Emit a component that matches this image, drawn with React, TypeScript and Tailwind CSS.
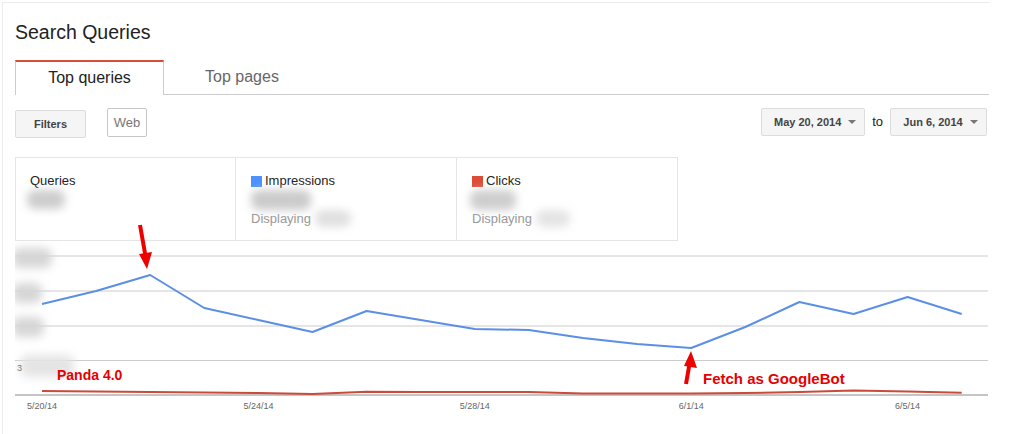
import React from "react";

const impressions = [304, 291, 275, 308, 320, 332, 311, 320, 329, 330, 338, 344, 348, 327, 302, 314, 297, 314];
const clicks = [391, 391.5, 392, 392.5, 393, 394, 391.7, 392, 392, 392, 393.5, 393.5, 393.5, 393, 392, 390.5, 391.5, 392.7];
const xAt = (i: number) => 42 + i * 54.1;

const xLabels = [
  { i: 0, label: "5/20/14" },
  { i: 4, label: "5/24/14" },
  { i: 8, label: "5/28/14" },
  { i: 12, label: "6/1/14" },
  { i: 16, label: "6/5/14" },
];

function toPoints(values: number[]) {
  return values.map((y, i) => `${xAt(i)},${y}`).join(" ");
}

function Blob({ className }: { className: string }) {
  return <span className={`block rounded-lg blur-[4px] ${className}`} />;
}

function Caret() {
  return (
    <span className="ml-[7px] inline-block h-0 w-0 border-x-[4px] border-t-[4px] border-x-transparent border-t-[#777]" />
  );
}

function Chart() {
  return (
    <div className="h-[193px] w-[975px]">
      <svg width={975} height={193} viewBox="15 241 975 193">
        <defs>
          <filter id="soft" x="-50%" y="-50%" width="200%" height="200%">
            <feGaussianBlur stdDeviation="5" />
          </filter>
        </defs>
        {[256, 291, 326, 360.5].map((y) => (
          <line key={y} x1={15} x2={988} y1={y} y2={y} stroke="#cccccc" strokeWidth={1} />
        ))}
        <line x1={15} x2={988} y1={395} y2={395} stroke="#8a8a8a" strokeWidth={1} />

        <g filter="url(#soft)" fill="#d6d6d6">
          <rect x={12} y={248} width={40} height={20} rx={8} />
          <rect x={12} y={283} width={30} height={20} rx={8} />
          <rect x={12} y={317} width={32} height={20} rx={8} />
          <rect x={20} y={355} width={54} height={22} rx={8} fill="#e4e4e4" />
        </g>
        <text x={17} y={371} fontSize={9} fill="#777" fontFamily="Liberation Sans, Arial, sans-serif">
          3
        </text>

        <polyline points={toPoints(clicks)} fill="none" stroke="#cc4a3a" strokeWidth={2} strokeLinejoin="round" />
        <polyline points={toPoints(impressions)} fill="none" stroke="#5b8fe6" strokeWidth={2} strokeLinejoin="round" />

        {xLabels.map((l) => (
          <text
            key={l.label}
            x={xAt(l.i)}
            y={409}
            fontSize={9}
            fill="#666"
            textAnchor="middle"
            fontFamily="Liberation Sans, Arial, sans-serif"
          >
            {l.label}
          </text>
        ))}
      </svg>
    </div>
  );
}

export default function App() {
  return (
    <div className="relative h-[434px] w-[1015px] overflow-hidden bg-white font-['Liberation_Sans',Arial,sans-serif]">
      <div className="ml-[2px] mt-[2px] h-[432px] w-[988px] border-l border-t border-[#ececec] pl-[12px] pr-[1px]">
        <h1 className="pt-[17px] text-[19.5px] leading-[24px] text-[#222]">Search Queries</h1>

        <div className="mt-[16px] flex h-[35px]">
          <div className="flex w-[149px] items-center justify-center border-x border-t-2 border-x-[#cccccc] border-t-[#dd4b39] pb-[1px] text-[16px] text-[#222]">
            Top queries
          </div>
          <div className="flex w-[156px] items-center justify-center border-b border-[#cccccc] pb-[1px] text-[16px] text-[#666]">
            Top pages
          </div>
          <div className="flex-1 border-b border-[#cccccc]" />
        </div>

        <div className="mt-[13px] flex h-[30px]">
          <button className="h-[28px] w-[71px] self-end rounded-[2px] border border-[#dcdcdc] bg-[#f5f5f5] text-[11px] font-bold text-[#444]">
            Filters
          </button>
          <button className="ml-[21px] h-[29px] w-[40px] self-start rounded-[2px] border border-[#c6c6c6] bg-white text-[13px] text-[#777]">
            Web
          </button>
          <div className="ml-auto flex items-center self-start">
            <button className="flex h-[28px] w-[104px] items-center justify-center rounded-[2px] border border-[#dcdcdc] bg-[#f5f5f5] pl-[4px] text-[11px] font-bold text-[#444]">
              May 20, 2014
              <Caret />
            </button>
            <span className="mx-[7px] text-[13px] text-[#222]">to</span>
            <button className="mr-[2px] flex h-[28px] w-[97px] items-center justify-center rounded-[2px] border border-[#dcdcdc] bg-[#f5f5f5] pl-[4px] text-[11px] font-bold text-[#444]">
              Jun 6, 2014
              <Caret />
            </button>
          </div>
        </div>

        <div className="mt-[19px] flex h-[84px] w-[663px] border border-[#e5e5e5]">
          <div className="w-[220px] border-r border-[#e5e5e5] pl-[14px] pt-[15px]">
            <div className="text-[13px] leading-[16px] text-[#222]">Queries</div>
            <Blob className="-ml-[3px] mt-[1px] h-[19px] w-[38px] bg-[#cdcdcd]" />
          </div>
          <div className="w-[221px] border-r border-[#e5e5e5] pl-[15px] pt-[15px]">
            <div className="flex items-center text-[13px] leading-[16px] text-[#222]">
              <span className="mr-[3px] h-[11px] w-[11px] bg-[#4d90fe]" />
              Impressions
            </div>
            <Blob className="mt-[1px] h-[20px] w-[60px] bg-[#cbcbcb]" />
            <div className="flex items-center text-[13px] leading-[16px] text-[#999]">
              Displaying
              <Blob className="ml-[4px] h-[17px] w-[36px] bg-[#e0e0e0]" />
            </div>
          </div>
          <div className="w-[220px] pl-[15px] pt-[15px]">
            <div className="flex items-center text-[13px] leading-[16px] text-[#222]">
              <span className="mr-[3px] h-[11px] w-[11px] bg-[#dd4b39]" />
              Clicks
            </div>
            <Blob className="-ml-[2px] mt-[1px] h-[20px] w-[46px] bg-[#cecece]" />
            <div className="flex items-center text-[13px] leading-[16px] text-[#999]">
              Displaying
              <Blob className="ml-[4px] h-[17px] w-[34px] bg-[#e4e4e4]" />
            </div>
          </div>
        </div>

        <Chart />
      </div>

      {/* annotations drawn over the screenshot */}
      <svg className="pointer-events-none absolute left-0 top-0" width={1015} height={434}>
        <line x1={140} y1={225} x2={145.5} y2={256} stroke="#ee0000" strokeWidth={4} />
        <polygon points="139,254 152,252 147,269" fill="#ee0000" />
        <line x1={686} y1={384} x2={689.5} y2={364} stroke="#ee0000" strokeWidth={4} />
        <polygon points="684,366 697,368 691,351" fill="#ee0000" />
      </svg>
      <div className="pointer-events-none absolute left-[57px] top-[367px] text-[14px] font-bold leading-[16px] text-[#e60000]">
        Panda 4.0
      </div>
      <div className="pointer-events-none absolute left-[703px] top-[370px] text-[15px] font-bold leading-[17px] text-[#e60000]">
        Fetch as GoogleBot
      </div>
    </div>
  );
}
